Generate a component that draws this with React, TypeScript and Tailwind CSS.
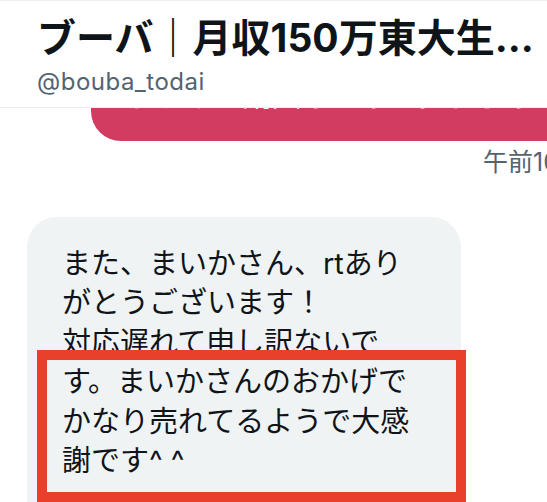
import React from "react";

export default function App() {
  const font = { fontFamily: '"Inter", "Noto Sans CJK JP", sans-serif' };
  return (
    <div
      className="relative h-[502px] w-[547px] overflow-hidden bg-white"
      style={font}
    >
      {/* Header */}
      <header className="sticky top-0 z-10 border-t border-b border-[#eceff1] bg-white pl-[37px] pr-[10px] pt-[15px] pb-[11px]">
        <div className="whitespace-nowrap text-[39px] font-bold leading-[44px] text-[#0f1419]">
          ブーバ｜月収150万東大生...
        </div>
        <div className="mt-[8px] text-[24px] leading-[28px] tracking-[0.5px] text-[#536471]">
          @bouba_todai
        </div>
      </header>

      {/* Conversation */}
      <div className="flex flex-col">
        {/* Sent bubble (pink), mostly hidden under header */}
        <div className="-mt-[40px] ml-[91px] w-[520px] overflow-hidden rounded-bl-[30px] bg-[#d13c60] pl-[36px] pb-[25px] pt-[9px]">
          <div className="whitespace-nowrap text-[29px] leading-[39px] text-white">
            ようやく購入しました。よろしくお願いします
          </div>
        </div>

        {/* Timestamp */}
        <div className="mt-[5px] whitespace-nowrap pl-[483px] text-[25px] leading-[32px] text-[#536471]">
          午前10:23
        </div>

        {/* Received bubble (grey) */}
        <div className="relative ml-[27px] mt-[39px] w-[434px] rounded-t-[30px] bg-[#eff3f4] pl-[35px] pr-[30px] pt-[27px] pb-[40px]">
          <p className="whitespace-nowrap text-[29px] leading-[39.4px] text-[#0f1419]">
            また、まいかさん、rtあり
            <br />
            がとうございます！
            <br />
            対応遅れて申し訳ないで
            <br />
            す。まいかさんのおかげで
            <br />
            かなり売れてるようで大感
            <br />
            謝です^ ^
          </p>

          {/* Red highlight box */}
          <div className="absolute left-[10px] top-[133px] h-[152px] w-[429px] border-[10px] border-[#e8402a]" />
        </div>
      </div>
    </div>
  );
}
